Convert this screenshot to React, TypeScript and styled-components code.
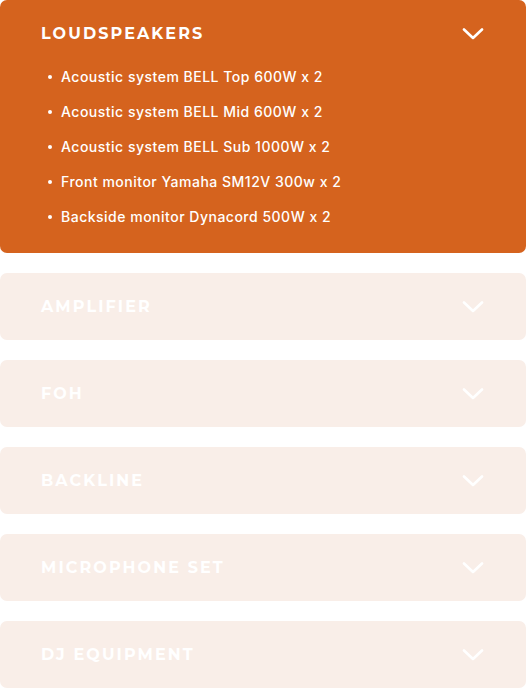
import React from "react";
import styled, { createGlobalStyle } from "styled-components";

const Global = createGlobalStyle`
  html, body { margin: 0; padding: 0; background: #ffffff; }
  body { font-family: "Inter", "Open Sans", sans-serif; }
`;

const Accordion = styled.div`
  display: flex;
  flex-direction: column;
  gap: 20px;
  width: 526px;
`;

const Panel = styled.section<{ $open: boolean }>`
  background: ${(p) => (p.$open ? "#D5631E" : "#F9EEE8")};
  border-radius: 7px;
  color: #ffffff;
`;

const Header = styled.div`
  height: 67px;
  display: flex;
  align-items: center;
  justify-content: space-between;
  padding: 0 42px 0 41px;
`;

const Title = styled.h3`
  margin: 0;
  font-family: "Montserrat", "Open Sans", sans-serif;
  font-weight: 700;
  font-size: 16px;
  letter-spacing: 2.1px;
  text-transform: uppercase;
  color: #ffffff;
`;

const Chevron = styled.svg`
  width: 22px;
  height: 12px;
  display: block;
`;

const Body = styled.ul`
  list-style: none;
  margin: -8px 0 0;
  padding: 0 0 19px 48px;
`;

const Item = styled.li`
  height: 35px;
  display: flex;
  align-items: center;
  font-size: 14px;
  letter-spacing: 0.5px;
  font-weight: 500;
  color: #ffffff;

  &::before {
    content: "";
    width: 4px;
    height: 4px;
    border-radius: 50%;
    background: #ffffff;
    margin-right: 9px;
  }
`;

const sections = [
  {
    title: "Loudspeakers",
    items: [
      "Acoustic system BELL Top 600W x 2",
      "Acoustic system BELL Mid 600W x 2",
      "Acoustic system BELL Sub 1000W x 2",
      "Front monitor Yamaha SM12V 300w x 2",
      "Backside monitor Dynacord 500W x 2",
    ],
  },
  { title: "Amplifier", items: [] },
  { title: "FOH", items: [] },
  { title: "Backline", items: [] },
  { title: "Microphone set", items: [] },
  { title: "DJ Equipment", items: [] },
];

export default function App() {
  return (
    <>
      <Global />
      <Accordion>
        {sections.map((s, i) => {
          const open = i === 0;
          return (
            <Panel key={s.title} $open={open}>
              <Header>
                <Title>{s.title}</Title>
                <Chevron viewBox="0 0 22 12">
                  <path
                    d="M2 1.5 L11 10 L20 1.5"
                    fill="none"
                    stroke="#ffffff"
                    strokeWidth="2.6"
                    strokeLinecap="round"
                    strokeLinejoin="round"
                  />
                </Chevron>
              </Header>
              {open && (
                <Body>
                  {s.items.map((it) => (
                    <Item key={it}>{it}</Item>
                  ))}
                </Body>
              )}
            </Panel>
          );
        })}
      </Accordion>
    </>
  );
}
